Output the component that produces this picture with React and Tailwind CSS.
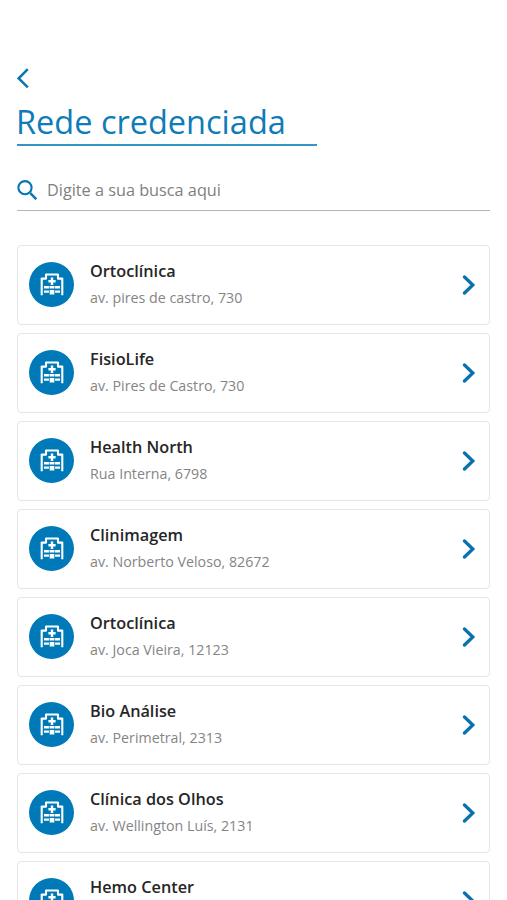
const clinics = [
  { name: "Ortoclínica", address: "av. pires de castro, 730" },
  { name: "FisioLife", address: "av. Pires de Castro, 730" },
  { name: "Health North", address: "Rua Interna, 6798" },
  { name: "Clinimagem", address: "av. Norberto Veloso, 82672" },
  { name: "Ortoclínica", address: "av. Joca Vieira, 12123" },
  { name: "Bio Análise", address: "av. Perimetral, 2313" },
  { name: "Clínica dos Olhos", address: "av. Wellington Luís, 2131" },
  { name: "Hemo Center", address: "" },
];

function HospitalIcon() {
  return (
    <svg className="h-6 w-6" viewBox="0 0 24 24" fill="none">
      <path
        d="M1.7 23.3V6.6h4.3V2.5h12v4.1h4.3v16.7"
        stroke="white"
        strokeWidth="2.1"
        strokeLinejoin="round"
      />
      <path d="M10.8 5.6h2.4v2.5h2.4v2.3h-2.4v2.5h-2.4v-2.5H8.4V8.100h2.400z" fill="white" />
      {/* windows and door */}
      <path
        d="M4 14.100h4.900v2.300H4zM9.500 14.100h5v2.300h-5zM15.100 14.100H20v2.300h-4.900zM4 18.600h4.900v2.200H4zM9.700 18.100h4.600v4.400H9.700zM15.100 18.600H20v2.200h-4.900z"
        fill="white"
      />
    </svg>
  );
}

function ClinicCard({ name, address }) {
  return (
    <button
      type="button"
      className="flex h-20 w-full shrink-0 items-center rounded border border-[#e6e6e6] bg-white pr-[13px] pl-[11px] text-left"
    >
      <span className="mb-[2px] flex h-[45px] w-[45px] shrink-0 items-center justify-center rounded-full bg-[#0079b9]">
        <HospitalIcon />
      </span>
      <span className="ml-4 h-[54px] flex-1">
        <span className="block text-[16.25px] leading-[26px] font-semibold text-[#262626]">{name}</span>
        <span className="block text-[14.25px] leading-[27px] text-[#858585]">{address}</span>
      </span>
      <svg className="h-5 w-[14px]" viewBox="0 0 14 20" fill="none">
        <path d="M2.500 2L10.800 10l-8.300 8" stroke="#0872ae" strokeWidth="3.300" strokeLinecap="round" />
      </svg>
    </button>
  );
}

function App() {
  return (
    <div className="flex h-screen flex-col overflow-hidden bg-white px-[17px] pt-[68px] font-['Open_Sans',sans-serif]">
      <button type="button" aria-label="Voltar" className="h-5 w-3 shrink-0">
        <svg className="h-5 w-3" viewBox="0 0 12 20" fill="none">
          <path d="M10.800 1.200L1.700 10.300l9.100 9" stroke="#0875b3" strokeWidth="2.500" />
        </svg>
      </button>
      <h1 className="h-[58px] w-[300px] shrink-0 border-b-2 border-[#3593c5] pt-[11px] -indent-[1px] text-[32.5px] leading-[45px] whitespace-nowrap text-[#0f7bb7]">
        Rede credenciada
      </h1>

      <label className="mt-[23px] flex h-[42px] shrink-0 items-center border-b border-[#b5b5b5] pt-[1px]">
        <svg className="h-5 w-5 shrink-0" viewBox="0 0 20 20" fill="none">
          <circle cx="8" cy="7.700" r="6.600" stroke="#0875b3" strokeWidth="2.100" />
          <path d="M13.300 13.200l6 6" stroke="#0875b3" strokeWidth="2.500" />
        </svg>
        <input
          type="text"
          placeholder="Digite a sua busca aqui"
          className="ml-[10px] flex-1 text-[16.25px] text-[#777] outline-none placeholder:text-[#808080]"
        />
      </label>

      <div className="mt-[34px] flex flex-col gap-2">
        {clinics.map((clinic, i) => (
          <ClinicCard key={i} name={clinic.name} address={clinic.address} />
        ))}
      </div>
    </div>
  );
}

export default App;
